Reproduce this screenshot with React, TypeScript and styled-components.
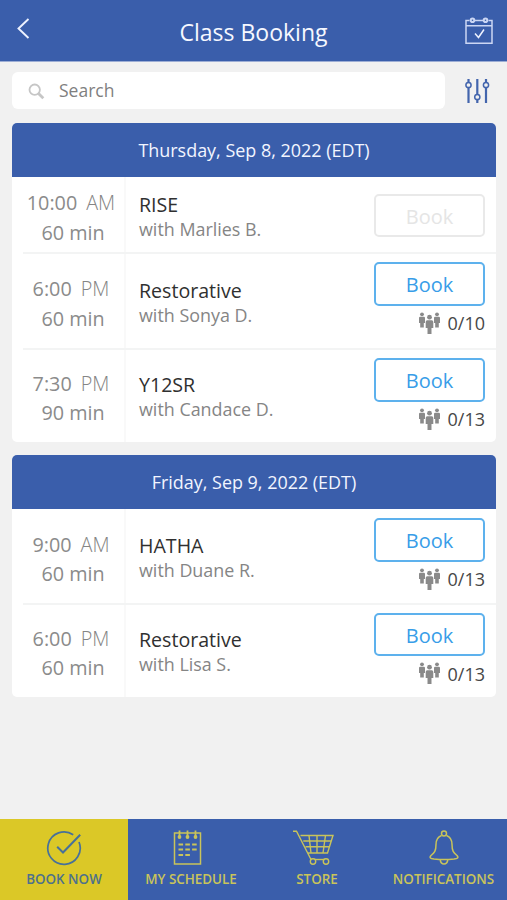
import React from "react";
import styled, { createGlobalStyle } from "styled-components";

const blue = "#3a5eab";
const yellow = "#dbc827";
const font = `"Open Sans", "Noto Sans", sans-serif`;

const GlobalStyle = createGlobalStyle`
  * { box-sizing: border-box; }
  body { margin: 0; background: #f1f1f1; font-family: ${font}; }
`;

const Screen = styled.div`
  width: 507px;
  height: 900px;
  display: flex;
  flex-direction: column;
  background: #f1f1f1;
  overflow: hidden;
`;

const Header = styled.header`
  height: 62px;
  flex: none;
  display: grid;
  grid-template-columns: 60px 1fr 60px;
  background: ${blue};
  color: #f6f8ff;
  border-bottom: 1px solid #9daed5;
`;

const Title = styled.h1`
  margin: 0;
  padding-top: 2px;
  text-align: center;
  font-size: 23px;
  line-height: 60px;
  font-weight: 400;
  white-space: nowrap;
`;

const BackButton = styled.div`
  padding: 17px 0 0 16px;
  svg { display: block; }
`;

const CalendarButton = styled.div`
  padding: 16px 0 0 17px;
  svg { display: block; }
`;

const SearchRow = styled.div`
  height: 37px;
  flex: none;
  display: flex;
  align-items: center;
  margin: 10px 0 14px 12px;
`;

const SearchBox = styled.div`
  width: 433px;
  height: 37px;
  display: flex;
  align-items: center;
  gap: 14px;
  padding-left: 16px;
  border-radius: 6px;
  background: #fff;
  color: #7f7f7f;
  font-size: 17.5px;
  line-height: 34px;
  padding-bottom: 2px;
  svg { margin-top: 3px; }
`;

const FilterButton = styled.div`
  margin-left: 19px;
  svg { display: block; }
`;

const Card = styled.section`
  width: 484px;
  flex: none;
  margin: 0 0 13px 12px;
  border-radius: 5px;
  background: #fff;
  overflow: hidden;
`;

const DateBar = styled.h2`
  height: 54px;
  margin: 0;
  background: ${blue};
  color: #f2f5ff;
  text-align: center;
  font-size: 17.95px;
  font-weight: 400;
  line-height: 55px;
`;

const Row = styled.div<{ $height: number }>`
  height: ${(p) => p.$height}px;
  display: grid;
  grid-template-columns: 114px 1fr 122px;
  position: relative;
  &:not(:first-of-type)::before {
    content: "";
    position: absolute;
    top: -1px;
    left: 11px;
    right: 0;
    height: 2px;
    background: #f3f4f4;
  }
`;

const TimeCell = styled.div`
  display: flex;
  flex-direction: column;
  justify-content: center;
  align-items: center;
  padding: 5.6px 0 0 10px;
  border-right: 2px solid #f9f9f9;
  color: #8b8b8b;
  font-size: 19.8px;
  line-height: 29.5px;
  white-space: nowrap;
`;

const TimeLine = styled.div`
  display: flex;
  gap: 9px;
  margin-left: -4px;
`;

const Period = styled.span`
  font-weight: 300;
  color: #858585;
`;

const Duration = styled.div``;

const InfoCell = styled.div`
  display: flex;
  flex-direction: column;
  justify-content: center;
  padding: 3px 0 0 13px;
  line-height: 25px;
  white-space: nowrap;
`;

const ClassName = styled.div`
  color: #303030;
  font-size: 19.6px;
`;

const Teacher = styled.div`
  color: #858585;
  font-size: 17.9px;
`;

const ActionCell = styled.div<{ $single?: boolean }>`
  display: flex;
  flex-direction: column;
  justify-content: ${(p) => (p.$single ? "center" : "flex-start")};
  align-items: flex-start;
  padding-top: ${(p) => (p.$single ? 1 : 9)}px;
`;

const BookButton = styled.button<{ $muted?: boolean }>`
  width: 111px;
  height: 43.5px;
  flex: none;
  padding: 2px 0 0;
  border: 2px solid ${(p) => (p.$muted ? "#e9e9e9" : "#5db1ed")};
  border-radius: 5px;
  background: #fff;
  color: ${(p) => (p.$muted ? "#e5e5e5" : "#389de8")};
  font-family: ${font};
  font-size: 20px;
  line-height: 37.5px;
`;

const Spots = styled.div`
  width: 111px;
  height: 35px;
  display: flex;
  justify-content: flex-end;
  align-items: center;
  gap: 7px;
  color: #474747;
  font-size: 18px;
`;

const TabBar = styled.nav`
  height: 81px;
  flex: none;
  display: grid;
  grid-template-columns: 128px 126px 126px 127px;
  margin-top: auto;
  background: ${blue};
`;

const Tab = styled.div<{ $active?: boolean }>`
  display: flex;
  flex-direction: column;
  align-items: center;
  padding-top: 11px;
  background: ${(p) => (p.$active ? yellow : blue)};
  color: ${(p) => (p.$active ? "#4d718b" : "#c9c45a")};
  svg { display: block; }
`;

const TabLabel = styled.span`
  margin-top: 2px;
  font-size: 13.4px;
  line-height: 20px;
  font-weight: 600;
  white-space: nowrap;
`;

const PeopleIcon = () => (
  <svg width="23" height="23" viewBox="0 0 23 23" fill="#8a8a8a">
    <circle cx="4" cy="2.300" r="1.900" />
    <path d="M2.200 4.800h3.600q1.200 0 1.200 1.200v5H5.800V15.500H2.200V11H1V6Q1 4.800 2.200 4.800z" />
    <circle cx="19" cy="2.300" r="1.900" />
    <path d="M17.200 4.800h3.600q1.200 0 1.200 1.200v5H20.800V15.500H17.200V11H16V6q0-1.200 1.200-1.200z" />
    <circle cx="11.500" cy="5.200" r="2.400" />
    <path d="M9.300 8.300h4.400q1.600 0 1.600 1.600v6H13.500V22H9.500v-6.100H7.700v-6q0-1.600 1.600-1.600z" />
  </svg>
);

const CheckIcon = () => (
  <svg width="36" height="37" viewBox="0 0 36 37" fill="none" stroke="#47709a" strokeWidth="1.7">
    <path d="M27.200 4.800A16.200 16.200 0 1 0 33 12" />
    <path d="M11.200 16.800 17 22.500 34.200 4.800" strokeWidth="2" />
  </svg>
);

const ScheduleIcon = () => (
  <svg width="42" height="37" viewBox="0 0 42 37" fill="none" stroke="#c9c45a" strokeWidth="1.5">
    <rect x="4.500" y="3" width="26" height="31" />
    <path d="M9.500 .500v7M17.500 .500v7M25.500 .500v7" strokeWidth="1.800" />
    <g fill="#c9c45a" stroke="none">
      <circle cx="9.500" cy="7" r="1.900" /><circle cx="17.500" cy="7" r="1.900" /><circle cx="25.500" cy="7" r="1.900" />
    </g>
    <path d="M8.500 14.500h18.500M8.500 19.500h18.500M8.500 25h12" strokeWidth="1.800" strokeDasharray="4.600 2.200" />
  </svg>
);

const CartIcon = () => (
  <svg width="49" height="37" viewBox="0 0 49 37" fill="none" stroke="#c9c45a" strokeWidth="1.400">
    <path d="M0 1.200h3.500L18 29.500M7.500 5.500h32.500L34.500 23H14.800M10.300 11h28M12.600 16.800h23.900M16 5.500l2 17.500M24 5.500V23M32.500 5.500 30 23" />
    <path d="M18 29.500h16.500" />
    <g fill={blue}><circle cx="20" cy="31.500" r="2.700" /><circle cx="33" cy="31.500" r="2.700" /></g>
  </svg>
);

const BellIcon = () => (
  <svg width="32" height="37" viewBox="0 0 32 37" fill="none" stroke="#c9c45a" strokeWidth="1.500">
    <circle cx="16" cy="3.500" r="2.500" />
    <path d="M13.500 5.500C9.500 7 8 10 8 14.500 8 21 6.500 22.500 3 25.500c-2 2.500-.5 3 3 3.500 7 .8 13 .8 20 0 3.500-.5 5-1 3-3.500-3.500-3-5-4.500-5-11 0-4.500-1.500-7.500-5.500-9" />
    <path d="M12.300 29.500c-.2 6 7.600 6 7.400 0" />
  </svg>
);

type Session = { time: string; period: string; length: string; name: string; teacher: string; spots?: string; height: number };

const days: { date: string; sessions: Session[] }[] = [
  {
    date: "Thursday, Sep 8, 2022 (EDT)",
    sessions: [
      { time: "10:00", period: "AM", length: "60 min", name: "RISE", teacher: "with Marlies B.", height: 76 },
      { time: "6:00", period: "PM", length: "60 min", name: "Restorative", teacher: "with Sonya D.", spots: "0/10", height: 96 },
      { time: "7:30", period: "PM", length: "90 min", name: "Y12SR", teacher: "with Candace D.", spots: "0/13", height: 93 },
    ],
  },
  {
    date: "Friday, Sep 9, 2022 (EDT)",
    sessions: [
      { time: "9:00", period: "AM", length: "60 min", name: "HATHA", teacher: "with Duane R.", spots: "0/13", height: 94.5 },
      { time: "6:00", period: "PM", length: "60 min", name: "Restorative", teacher: "with Lisa S.", spots: "0/13", height: 93.5 },
    ],
  },
];

const tabs = [
  { label: "BOOK NOW", icon: <CheckIcon />, active: true },
  { label: "MY SCHEDULE", icon: <ScheduleIcon /> },
  { label: "STORE", icon: <CartIcon /> },
  { label: "NOTIFICATIONS", icon: <BellIcon /> },
];

export default function App() {
  return (
    <Screen>
      <GlobalStyle />
      <Header>
        <BackButton>
          <svg width="14" height="23" viewBox="0 0 14 23" fill="none" stroke="#edf2ff" strokeWidth="1.900">
            <path d="M12.500 2 2.500 11.500l10 9.500" />
          </svg>
        </BackButton>
        <Title>Class Booking</Title>
        <CalendarButton>
          <svg width="30" height="30" viewBox="0 0 30 30" fill="none" stroke="#cbd6f4" strokeWidth="1.500">
            <path d="M5.500 4.500H2v22.700h26V4.500h-3.500M10.500 4.500h9M2 9.700h26" />
            <circle cx="8.500" cy="4.300" r="1.800" strokeWidth="2" />
            <circle cx="21.500" cy="4.300" r="1.800" strokeWidth="2" />
            <path d="m11 17.500 3.500 4 5.500-8" stroke="#eff3ff" />
          </svg>
        </CalendarButton>
      </Header>
      <SearchRow>
        <SearchBox>
          <svg width="17" height="17" viewBox="0 0 17 17" fill="none" stroke="#c6c6c6">
            <circle cx="6.700" cy="6.700" r="5.200" strokeWidth="1.800" />
            <path d="m10.500 10.500 4.800 4.800" strokeWidth="2.800" />
          </svg>
          Search
        </SearchBox>
        <FilterButton>
          <svg width="27" height="26" viewBox="0 0 27 26" fill="#f1f1f1" stroke="#4365ad" strokeWidth="2">
            <path d="M4.500 1v24M13.300 1v24M22 1v24" strokeWidth="2.200" />
            <circle cx="4.500" cy="7" r="2.600" strokeWidth="1.500" />
            <circle cx="13.300" cy="19" r="2.600" strokeWidth="1.500" />
            <circle cx="22" cy="7" r="2.600" strokeWidth="1.500" />
          </svg>
        </FilterButton>
      </SearchRow>
      {days.map((day) => (
        <Card key={day.date}>
          <DateBar>{day.date}</DateBar>
          {day.sessions.map((s) => (
            <Row key={s.time} $height={s.height}>
              <TimeCell>
                <TimeLine><span>{s.time}</span><Period>{s.period}</Period></TimeLine>
                <Duration>{s.length}</Duration>
              </TimeCell>
              <InfoCell>
                <ClassName>{s.name}</ClassName>
                <Teacher>{s.teacher}</Teacher>
              </InfoCell>
              <ActionCell $single={!s.spots}>
                <BookButton $muted={!s.spots}>Book</BookButton>
                {s.spots && <Spots><PeopleIcon />{s.spots}</Spots>}
              </ActionCell>
            </Row>
          ))}
        </Card>
      ))}
      <TabBar>
        {tabs.map((t) => (
          <Tab key={t.label} $active={t.active}>
            {t.icon}
            <TabLabel>{t.label}</TabLabel>
          </Tab>
        ))}
      </TabBar>
    </Screen>
  );
}
